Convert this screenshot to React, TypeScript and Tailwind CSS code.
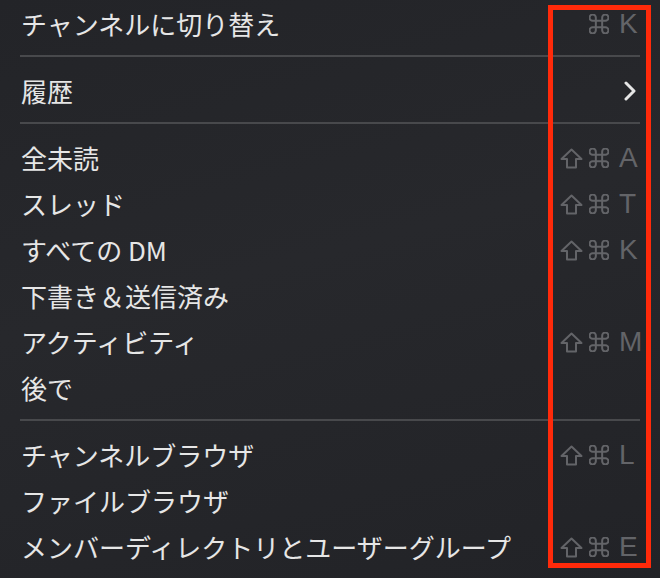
import type { ReactNode } from 'react'

type Item = {
  label: string
  shift?: boolean
  cmd?: boolean
  keyChar?: string
  submenu?: boolean
}

const groups: Item[][] = [
  [{ label: 'チャンネルに切り替え', cmd: true, keyChar: 'K' }],
  [{ label: '履歴', submenu: true }],
  [
    { label: '全未読', shift: true, cmd: true, keyChar: 'A' },
    { label: 'スレッド', shift: true, cmd: true, keyChar: 'T' },
    { label: 'すべての DM', shift: true, cmd: true, keyChar: 'K' },
    { label: '下書き＆送信済み' },
    { label: 'アクティビティ', shift: true, cmd: true, keyChar: 'M' },
    { label: '後で' },
  ],
  [
    { label: 'チャンネルブラウザ', shift: true, cmd: true, keyChar: 'L' },
    { label: 'ファイルブラウザ' },
    { label: 'メンバーディレクトリとユーザーグループ', shift: true, cmd: true, keyChar: 'E' },
  ],
]

function ShiftGlyph() {
  return (
    <svg width="23" height="21" viewBox="0 0 23 21" fill="none">
      <path
        d="M11.5 1.5 L21.5 11 H16 V19.5 H7 V11 H1.5 Z"
        stroke="#636468"
        strokeWidth="2"
        strokeLinejoin="round"
      />
    </svg>
  )
}

function CmdGlyph() {
  return (
    <svg width="20" height="20" viewBox="2.5 2.5 19 19" fill="none">
      <path
        d="M15 6v12a3 3 0 1 0 3-3H6a3 3 0 1 0 3 3V6a3 3 0 1 0-3 3h12a3 3 0 1 0-3-3"
        stroke="#636468"
        strokeWidth="1.9"
        strokeLinecap="round"
        strokeLinejoin="round"
      />
    </svg>
  )
}

function Chevron() {
  return (
    <svg width="12" height="20" viewBox="0 0 12 20" fill="none">
      <path d="M2 2 L10 10 L2 18" stroke="#e6e6e6" strokeWidth="3" strokeLinecap="round" strokeLinejoin="round" />
    </svg>
  )
}

function Shortcut({ item }: { item: Item }) {
  if (item.submenu) {
    return (
      <div className="flex w-[81px] justify-end pr-[5px]">
        <Chevron />
      </div>
    )
  }
  if (!item.keyChar) return null
  return (
    <div className="flex w-[81px] items-center">
      <div className="flex w-[23px] justify-center">{item.shift && <ShiftGlyph />}</div>
      <div className="w-[6px]" />
      <div className="flex w-[20px] justify-center">{item.cmd && <CmdGlyph />}</div>
      <div className="w-[10px]" />
      <span className="w-[22px] text-[28px] leading-none text-[#636468] font-['Liberation_Sans',Arial,sans-serif]">
        {item.keyChar}
      </span>
    </div>
  )
}

function Separator() {
  return <div className="mx-[20px] mt-[8px] mb-[11px] h-[2px] bg-[#48494c]" />
}

export default function App() {
  const rows: ReactNode[] = []
  groups.forEach((group, gi) => {
    if (gi > 0) rows.push(<Separator key={`sep-${gi}`} />)
    group.forEach((item) => {
      rows.push(
        <div key={item.label} className="flex h-[46px] items-center justify-between pl-[21px] pr-[19px]">
          <span className="text-[26px] leading-none text-[#e6e6e6]">{item.label}</span>
          <Shortcut item={item} />
        </div>
      )
    })
  })

  return (
    <div className="relative h-[578px] w-[660px] overflow-hidden bg-[linear-gradient(165deg,#232428_0%,#27282c_45%,#222327_100%)] pt-[1px] font-['Noto_Sans_CJK_JP','Noto_Sans',sans-serif]">
      {rows}
      {/* annotation box over the shortcut column */}
      <div className="pointer-events-none absolute left-[548px] top-[5px] h-[563px] w-[103px] border-[5px] border-[#ff2a0a]" />
    </div>
  )
}
